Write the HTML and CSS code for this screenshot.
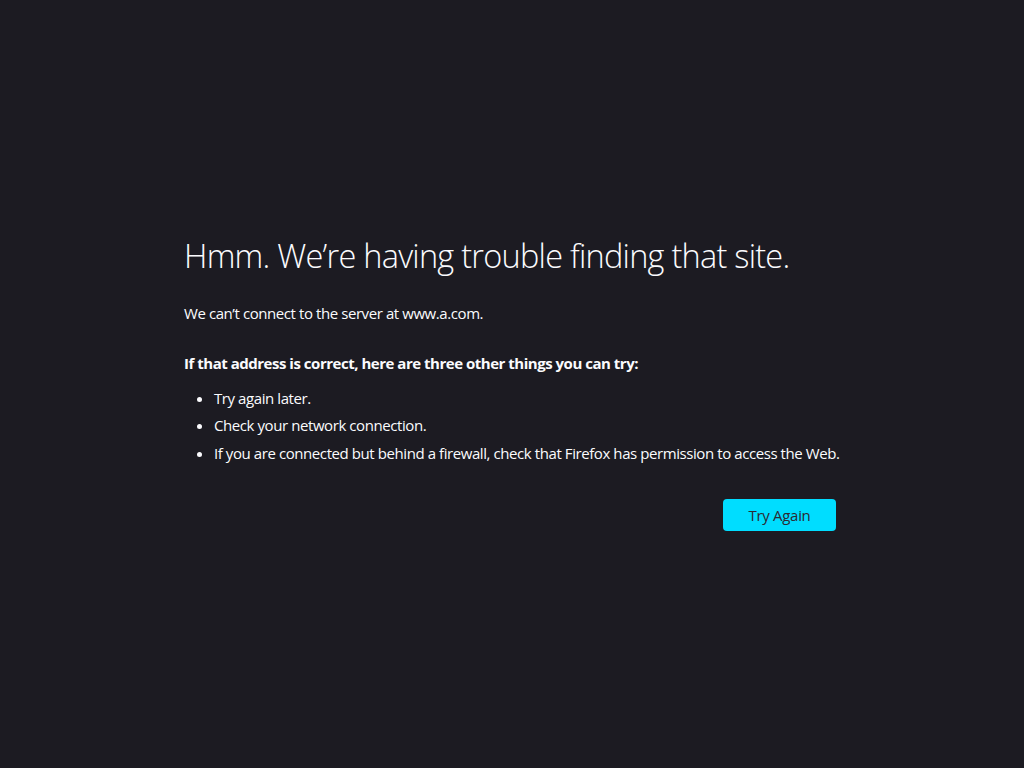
FILE: index.html
```html
<!DOCTYPE html>
<html lang="en">
<head>
<meta charset="utf-8">
<title>Server Not Found</title>
<link rel="stylesheet" href="styles.css">
</head>
<body>
<main class="container">
  <h1 class="title">Hmm. We’re having trouble finding that site.</h1>
  <p class="desc">We can’t connect to the server at www.a.com.</p>
  <p class="tips-head">If that address is correct, here are three other things you can try:</p>
  <ul class="tips">
    <li>Try again later.</li>
    <li>Check your network connection.</li>
    <li>If you are connected but behind a firewall, check that Firefox has permission to access the Web.</li>
  </ul>
  <div class="actions">
    <button class="btn">Try Again</button>
  </div>
</main>
</body>
</html>
```

FILE: styles.css
```css
html, body {
  margin: 0;
  height: 100%;
}
body {
  box-sizing: border-box;
  padding: 0 4px 1px 0;
  background: #1c1b22;
  color: #fbfbfe;
  font-family: "Open Sans", "Noto Sans", sans-serif;
  font-size: 15px;
  letter-spacing: -0.42px;
  display: flex;
  align-items: center;
  justify-content: center;
}
.container {
  width: 652px;
  display: flex;
  flex-direction: column;
}
.title {
  margin: 0;
  font-weight: 300;
  font-size: 32.5px;
  line-height: 40px;
  letter-spacing: -0.75px;
}
.desc {
  margin: 26px 0 0;
  line-height: 22px;
}
.tips-head {
  margin: 28px 0 0;
  font-weight: 700;
  line-height: 22px;
  letter-spacing: -0.48px;
}
.tips {
  margin: 13px 0 0;
  padding-left: 30px;
}
.tips li {
  line-height: 22px;
  margin-bottom: 5.5px;
  white-space: nowrap;
}
.actions {
  display: flex;
  justify-content: flex-end;
  margin-top: 30px;
}
.btn {
  width: 113px;
  height: 32px;
  border: none;
  border-radius: 4px;
  background: #00ddff;
  color: #2b2a33;
  font-family: inherit;
  font-size: 15px;
  letter-spacing: -0.3px;
  padding: 0;
}
```
